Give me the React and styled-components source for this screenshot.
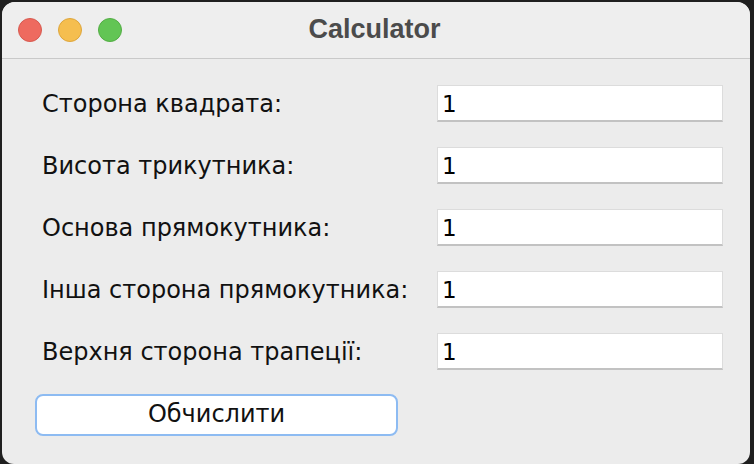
import styled, { createGlobalStyle } from 'styled-components';

const GlobalStyle = createGlobalStyle`
    html, body {
        margin: 0;
        padding: 0;
        background: #1f1f1f;
        overflow: hidden;
    }
`;

const Window = styled.div`
    margin: 2px 4px 0 2px;
    height: 462px;
    background: #ececec;
    border-radius: 13px 13px 12px 12px;
    overflow: hidden;
    display: flex;
    flex-direction: column;
`;

const TitleBar = styled.div`
    position: relative;
    height: 56px;
    flex: none;
    display: flex;
    align-items: center;
    justify-content: center;
    background: #eeeeee;
    border-bottom: 1px solid #c9c9c9;
`;

const Lights = styled.div`
    position: absolute;
    left: 16px;
    top: 16px;
    display: flex;
    gap: 16px;
`;

const Light = styled.span`
    width: 24px;
    height: 24px;
    border-radius: 50%;
    box-sizing: border-box;
    background: ${(p) => p.color};
    border: 1px solid ${(p) => p.edge};
`;

const Title = styled.div`
    font-family: 'Liberation Sans', Arial, sans-serif;
    font-weight: bold;
    font-size: 27px;
    color: #4b4b4b;
    margin-top: -2px;
    margin-left: -3px;
`;

const Content = styled.div`
    padding: 26px 27px 0 33px;
    display: flex;
    flex-direction: column;
    gap: 24px;
`;

const Form = styled.div`
    display: grid;
    grid-template-columns: 1fr 286px;
    row-gap: 25px;
    align-items: center;
`;

const Label = styled.label`
    padding-left: 7px;
    font-family: 'DejaVu Sans', Verdana, sans-serif;
    font-size: 24px;
    color: #111;
`;

const Field = styled.input`
    box-sizing: border-box;
    height: 37px;
    width: 286px;
    margin: 0;
    padding: 2px 4px 0;
    border: 1px solid #dcdcdc;
    border-bottom: 2px solid #c2c2c2;
    background: #fff;
    font-family: 'DejaVu Sans', Verdana, sans-serif;
    font-size: 23px;
    color: #000;
    outline: none;
`;

const Button = styled.button`
    box-sizing: border-box;
    width: 363px;
    height: 42px;
    border: 2px solid #8dbbf2;
    border-radius: 8px;
    background: #fff;
    font-family: 'DejaVu Sans', Verdana, sans-serif;
    font-size: 24px;
    color: #111;
    padding: 0 0 2px;
`;

const rows = [
    'Сторона квадрата:',
    'Висота трикутника:',
    'Основа прямокутника:',
    'Інша сторона прямокутника:',
    'Верхня сторона трапеції:',
];

const App = () => {
    return (
        <>
            <GlobalStyle />
            <Window>
                <TitleBar>
                    <Lights>
                        <Light color="#ee6a5f" edge="#d75a50" />
                        <Light color="#f5be4f" edge="#dea63c" />
                        <Light color="#62c554" edge="#53ad44" />
                    </Lights>
                    <Title>Calculator</Title>
                </TitleBar>
                <Content>
                    <Form>
                        {rows.map((text) => [
                            <Label key={text + 'l'}>{text}</Label>,
                            <Field key={text} defaultValue="1" />,
                        ])}
                    </Form>
                    <Button>Обчислити</Button>
                </Content>
            </Window>
        </>
    );
};

export default App;
